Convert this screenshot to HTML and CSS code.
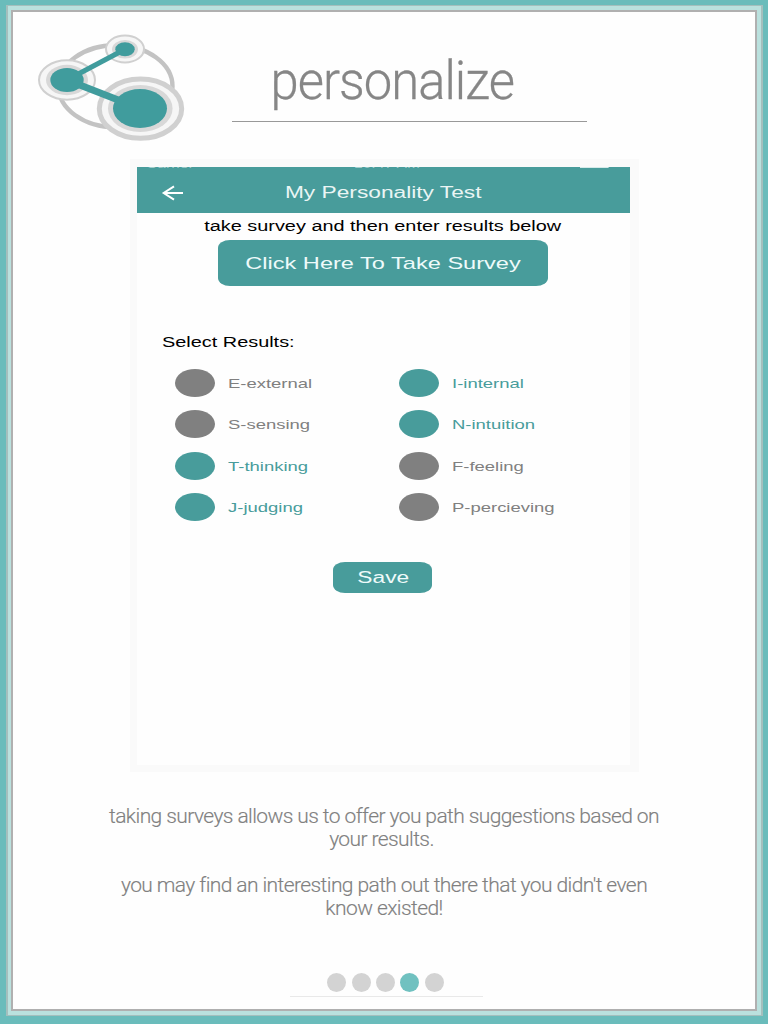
FILE: index.html
```
<!DOCTYPE html>
<html lang="en">
<head>
<meta charset="utf-8">
<title>personalize</title>
<link rel="stylesheet" href="styles.css">
</head>
<body>
<div class="frame-outer"><div class="frame-light"><main class="page">
  <header class="page-head">
    <svg class="logo" width="150" height="108" viewBox="37 33 150 108" aria-hidden="true">
      <ellipse cx="115.5" cy="86.3" rx="57" ry="41" fill="none" stroke="#c3c3c3" stroke-width="4.4"/>
      <ellipse cx="67" cy="80" rx="28" ry="19.7" fill="#f6f6f6" stroke="#d0d0d0" stroke-width="2"/>
      <ellipse cx="67" cy="80" rx="21" ry="15.2" fill="#d8d8d8"/>
      <ellipse cx="125" cy="49" rx="19" ry="13.5" fill="#f6f6f6" stroke="#d0d0d0" stroke-width="2"/>
      <ellipse cx="125" cy="49.3" rx="13" ry="9.3" fill="#d8d8d8"/>
      <ellipse cx="140.5" cy="108.7" rx="41.2" ry="29.6" fill="#f6f6f6" stroke="#d0d0d0" stroke-width="5"/>
      <ellipse cx="140.3" cy="108.5" rx="32.3" ry="23.6" fill="#d8d8d8"/>
      <path d="M67 80L125 49.3" stroke="#409c9d" stroke-width="5"/>
      <path d="M67 80L140 108.5" stroke="#409c9d" stroke-width="7"/>
      <ellipse cx="67" cy="80" rx="16.7" ry="12" fill="#409c9d"/>
      <ellipse cx="125" cy="49.3" rx="9.7" ry="7" fill="#409c9d"/>
      <ellipse cx="140" cy="108.5" rx="27" ry="19.5" fill="#409c9d"/>
    </svg>
    <h1 class="title"><span class="title-text">personalize</span></h1>
  </header>

  <section class="shot"><div class="screen">
    <div class="status"><span class="carrier">Carrier</span><span class="clock">10:47 AM</span><span class="battery"></span></div>
    <div class="navbar">
      <svg class="back" width="24" height="18" viewBox="0 0 24 18"><path d="M22 9H3M13 2.3L2.7 9L13 15.7" fill="none" stroke="#fff" stroke-width="2"/></svg>
      <span class="wide nav-title">My Personality Test</span>
    </div>
    <p class="hint"><span class="wide">take survey and then enter results below</span></p>
    <div class="survey-btn"><span class="wide">Click Here To Take Survey</span></div>
    <h2 class="label"><span class="wide left">Select Results:</span></h2>
    <div class="options">
      <div class="option"><i class="dot"></i><span class="wide left">E-external</span></div>
      <div class="option on"><i class="dot"></i><span class="wide left">I-internal</span></div>
      <div class="option"><i class="dot"></i><span class="wide left">S-sensing</span></div>
      <div class="option on"><i class="dot"></i><span class="wide left">N-intuition</span></div>
      <div class="option on"><i class="dot"></i><span class="wide left">T-thinking</span></div>
      <div class="option"><i class="dot"></i><span class="wide left">F-feeling</span></div>
      <div class="option on"><i class="dot"></i><span class="wide left">J-judging</span></div>
      <div class="option"><i class="dot"></i><span class="wide left">P-percieving</span></div>
    </div>
    <div class="save-btn"><span class="wide">Save</span></div>
  </div></section>

  <section class="copy">
    <p>taking surveys allows us to offer you path suggestions based on<br><span class="trail">your results.</span></p>
    <p>you may find an interesting path out there that you didn't even<br>know existed!</p>
  </section>

  <nav class="pager"><i></i><i></i><i></i><i class="current"></i><i></i></nav>
</main></div></div>
</body>
</html>
```
FILE: styles.css
```
* { box-sizing: border-box; margin: 0; padding: 0; }
html { background: #6abcbb; }
body { width: 768px; height: 1022px; padding: 5px 5px 6px 6px; background: #6abcbb; font-family: "Liberation Sans", Arial, sans-serif; }
.frame-outer { height: 1011px; border: 2px solid #a4bfbd; border-top-width: 1px; border-bottom-width: 1px; }
.frame-light { height: 1009px; border: 4px solid #bae1de; border-left-width: 3px; }
.page { height: 1001px; border: 2px solid #b0b0b0; background: #fefefe; display: flex; flex-direction: column; }

.page-head { display: flex; height: 147px; padding: 21px 0 0 24px; }
.logo { flex: none; }
.title { margin-left: 45px; width: 355px; height: 89px; border-bottom: 1px solid #999; text-align: center; font: 300 53px/62px Roboto, sans-serif; color: #868686; padding-top: 17px; }
.title-text { display: inline-block; margin-right: 34px; letter-spacing: -1px; transform: scaleX(.957); -webkit-text-stroke: .3px #868686; }

.shot { width: 509px; height: 613px; margin: 0 0 -1px 117px; padding: 8px 9px 7px 7px; background: #fafafa; }
.screen { height: 598px; background: #fefefe; display: flex; flex-direction: column; overflow: hidden; }
.wide { display: inline-block; white-space: nowrap; transform: scaleX(1.42); }
.left { transform-origin: left center; }

.status { position: relative; height: 2px; background: #489c9b; overflow: hidden; color: #a3cecd; font-size: 12px; line-height: 14px; }
.status span { position: absolute; bottom: -2px; transform: scaleX(1.3); transform-origin: left; }
.carrier { left: 9px; }
.clock { left: 217px; }
.status .battery { left: 443px; bottom: 1px; width: 22px; height: 1px; background: #d5eae9; }
.navbar { height: 44px; background: #489c9b; color: #eaf5f4; display: grid; grid-template-columns: 48px 396px 49px; align-items: center; text-align: center; font-size: 16px; }
.back { margin-left: 24px; margin-top: 3px; }
.nav-title { justify-self: center; margin-top: 4px; }
.hint { height: 27px; line-height: 26px; font-size: 14px; color: #000; text-align: center; padding-right: 1px; }
.survey-btn { width: 330px; height: 46px; margin-left: 81px; border-radius: 12px / 8px; background: #489c9b; color: #eefafa; text-align: center; font-size: 16.6px; line-height: 47px; }
.label { margin: 46px 0 0 25px; height: 20px; font-size: 14px; font-weight: 400; line-height: 20px; color: #000; }
.options { margin: 17px 0 0 38px; display: grid; grid-template-columns: 224px 224px; grid-auto-rows: 28px; row-gap: 13.33px; }
.option { display: flex; align-items: center; gap: 13px; font-size: 13px; color: #808080; }
.option .wide { margin-top: 1px; }
.option.on { color: #489c9b; }
.dot { width: 40px; height: 28px; border-radius: 50%; background: #808080; }
.option.on .dot { background: #489c9b; }
.save-btn { width: 99px; height: 31px; margin: 41px 0 0 196px; border-radius: 12px / 8px; background: #489c9b; color: #eefafa; font-size: 16px; line-height: 32px; text-align: center; padding-left: 1px; }

.copy { margin-top: 34px; height: 168px; width: 742px; text-align: center; font: 300 21px/23px Roboto, sans-serif; letter-spacing: -.59px; color: #808080; -webkit-text-stroke: .15px #808080; }
.copy p { margin-bottom: 23px; }
.trail { margin-right: 5px; }
.pager { display: flex; justify-content: center; gap: 5.4px; width: 193px; height: 24px; margin-left: 277px; padding-right: 2px; border-bottom: 1px solid #e9e9e9; }
.pager i { width: 19px; height: 19px; border-radius: 50%; background: #d3d3d3; }
.pager .current { background: #70c1c0; }
```
